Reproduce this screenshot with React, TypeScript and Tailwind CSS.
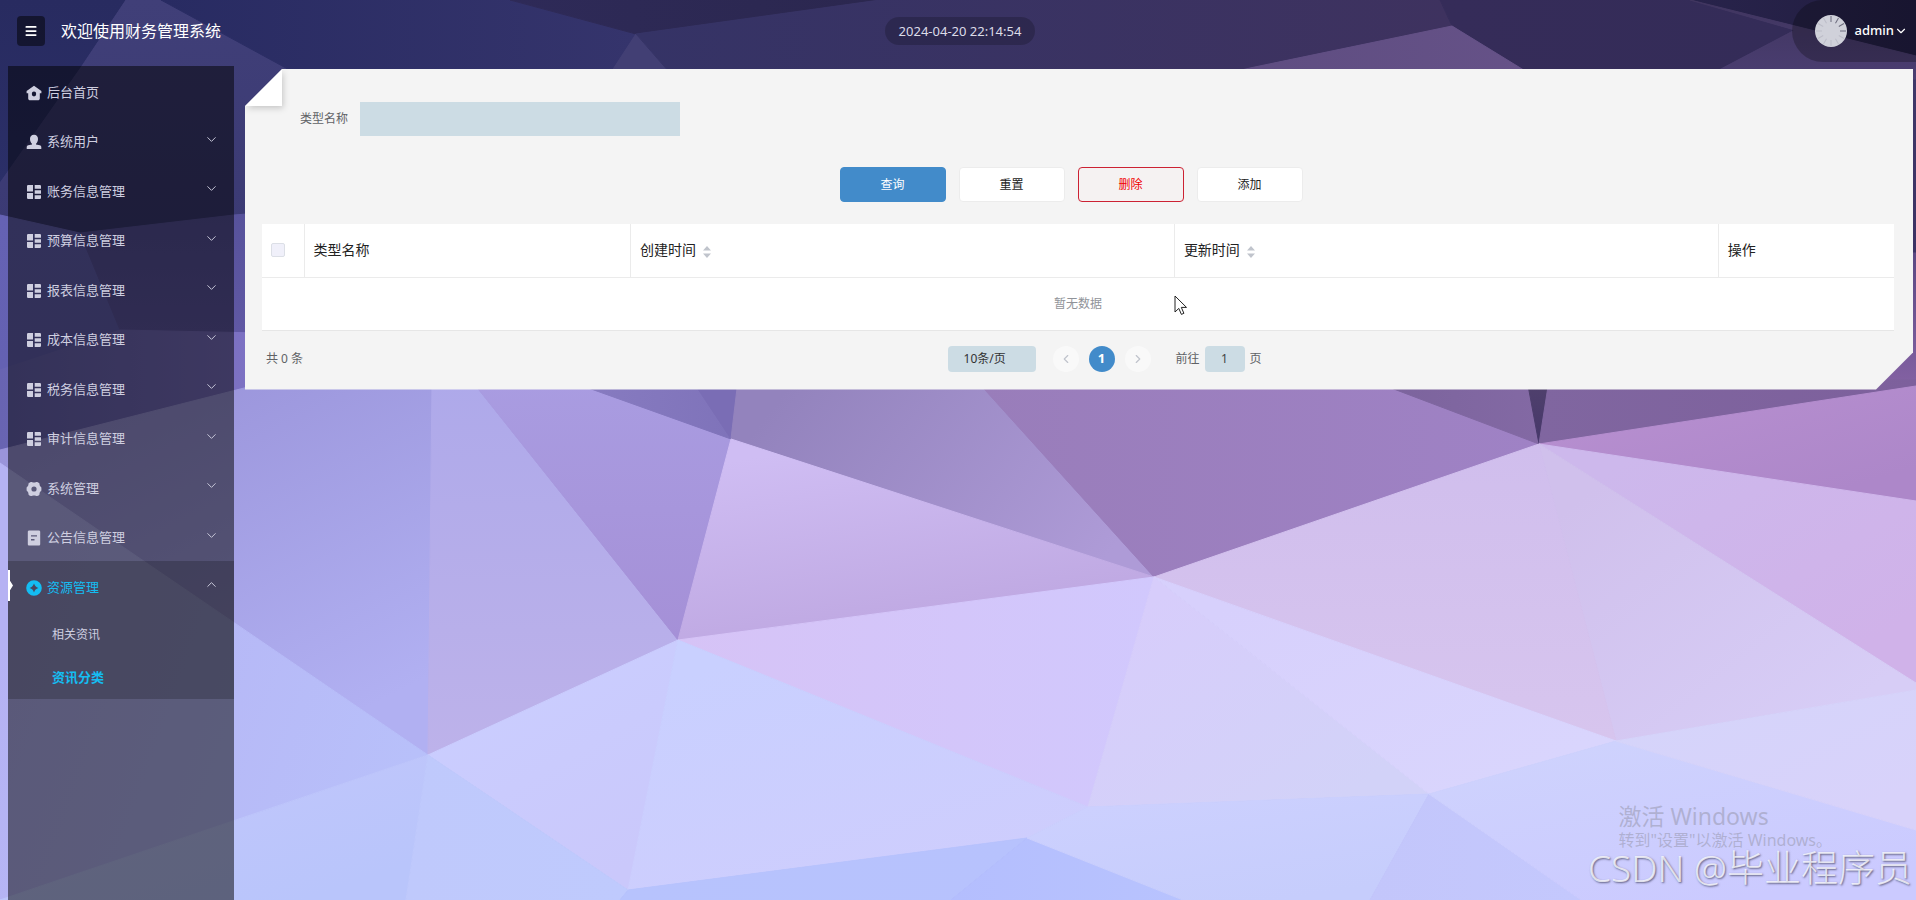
import { ChevronDown, ChevronLeft, ChevronRight, ChevronUp, Menu } from 'lucide-react'
import { twMerge } from 'tailwind-merge'

type IconName = 'home' | 'user' | 'grid' | 'setting' | 'doc' | 'compass'

interface MenuItem {
  label: string
  icon: IconName
  children?: string[]
}

const menu: MenuItem[] = [
  { label: '后台首页', icon: 'home' },
  { label: '系统用户', icon: 'user', children: [] },
  { label: '账务信息管理', icon: 'grid', children: [] },
  { label: '预算信息管理', icon: 'grid', children: [] },
  { label: '报表信息管理', icon: 'grid', children: [] },
  { label: '成本信息管理', icon: 'grid', children: [] },
  { label: '税务信息管理', icon: 'grid', children: [] },
  { label: '审计信息管理', icon: 'grid', children: [] },
  { label: '系统管理', icon: 'setting', children: [] },
  { label: '公告信息管理', icon: 'doc', children: [] },
  { label: '资源管理', icon: 'compass', children: ['相关资讯', '资讯分类'] },
]

// points, start color, end color, gradient direction (deg)
const facets: [string, string, string, number][] = [
  // top strip and left edge
  ['0,0 126,0 82,66 0,183', '#282b60', '#2b2f68', 90],
  ['126,0 161,0 330,92 330,210 234,215 80,233 0,215 0,183 82,66', '#403f78', '#3b3a74', 90],
  ['161,0 510,0 636,34 616,69 600,110 330,92', '#282b62', '#35346c', 0],
  ['510,0 880,0 636,34', '#2e2a58', '#2b274f', 0],
  ['636,34 676,80 606,80', '#423f74', '#423f74', 0],
  ['880,0 1440,0 1452,26 1250,68 1200,90 676,80 636,34', '#353366', '#3e325f', 0],
  ['1440,0 1690,0 1795,30 1700,80 1540,80 1452,26', '#352c59', '#342c58', 0],
  ['1452,26 1540,80 1200,80 1250,68', '#5d4c80', '#665288', 0],
  ['1690,0 1916,0 1916,56', '#28234b', '#211d40', 0],
  ['1690,0 1916,56 1916,90 1700,80 1795,30', '#40355f', '#4c3f74', 90],
  ['1900,80 1916,80 1916,253 1900,253', '#3f3768', '#3c3264', 90],
  ['1860,253 1916,253 1916,386 1860,398', '#5c4883', '#8764a6', 90],
  ['0,215 80,233 120,330 0,370', '#6562b4', '#6461b2', 90],
  ['80,233 234,215 260,213 260,333 120,330', '#57529b', '#6058a4', 90],
  ['0,370 120,330 260,333 260,384 0,450', '#6864b2', '#7e72c4', 0],
  // below the panel
  ['0,450 260,384 432,380 428,755 0,463', '#9a94da', '#b1b0f2', 60],
  ['432,380 471,380 678,640 428,755', '#aea9ea', '#bdb2ea', 90],
  ['471,380 566,380 731,439 678,640', '#a99ce1', '#a590d7', 90],
  ['566,380 692,380 731,439', '#887cc1', '#7f73ba', 0],
  ['692,380 738,380 731,439', '#7a6db5', '#7a6db5', 0],
  ['738,380 976,380 1154,577 731,439', '#9383bd', '#ae9bd7', 20],
  ['976,380 1370,380 1539,444 1154,577', '#997dba', '#9f82c5', 0],
  ['1370,380 1527,380 1539,444', '#7b639c', '#8369a4', 0],
  ['1527,380 1549,380 1539,444', '#50416d', '#46376a', 90],
  ['1549,380 1916,380 1916,386 1539,444', '#8066a0', '#7d609c', 0],
  ['1539,444 1916,386 1916,501', '#b78fd0', '#ad87c9', 45],
  ['1539,444 1916,501 1916,683', '#cdb8ec', '#d0b2e9', 45],
  ['1539,444 1916,683 1916,690 1616,741', '#d0c0ec', '#d7cdf6', 45],
  ['1539,444 1616,741 1154,577', '#d0beed', '#d7c5ee', 90],
  ['731,439 1154,577 678,640', '#cfbdf3', '#bda6e0', 70],
  ['678,640 1154,577 1088,807', '#d6c3f6', '#d1c8fd', 0],
  ['1154,577 1429,794 1088,807', '#d7cdfb', '#d2d2f8', 45],
  ['1154,577 1616,741 1429,794', '#d7d0fc', '#d9d5fd', 45],
  ['428,755 678,640 628,890', '#caceff', '#cac8fb', 60],
  ['678,640 1088,807 1027,838 628,890', '#c9d0ff', '#cecdfd', 60],
  ['0,463 428,755 35,888 0,900', '#b5b2f3', '#b8c0fa', 20],
  ['0,900 35,888 428,755 406,900', '#c2c6fb', '#b9c5fb', 45],
  ['428,755 628,890 620,900 406,900', '#bfc9fc', '#bfcafd', 0],
  ['628,890 1027,838 951,900 620,900', '#b7c3fd', '#b7c2fd', 0],
  ['1027,838 1183,900 951,900', '#b4befe', '#b8c3fe', 0],
  ['1088,807 1429,794 1370,900 1183,900 1027,838', '#ccd0fe', '#c6cdfc', 60],
  ['1429,794 1581,900 1370,900', '#c3c6fb', '#c4c8fd', 0],
  ['1429,794 1616,741 1916,830 1916,900 1581,900', '#ced2fd', '#cbcaff', 60],
  ['1616,741 1916,690 1916,830', '#d5d4fa', '#d8d2fa', 45],
]

function Backdrop() {
  return (
    <svg
      className="absolute inset-0 -z-10 size-full"
      viewBox="0 0 1916 900"
      preserveAspectRatio="xMidYMid slice"
      aria-hidden="true"
    >
      <defs>
        {facets.map(([, from, to, angle], i) => (
          <linearGradient key={i} id={`facet-${i}`} gradientTransform={`rotate(${angle} 0.5 0.5)`}>
            <stop offset="0" stopColor={from} />
            <stop offset="1" stopColor={to} />
          </linearGradient>
        ))}
      </defs>
      <rect width="1916" height="900" fill="#6562b0" />
      {facets.map(([points], i) => (
        <polygon key={i} points={points} fill={`url(#facet-${i})`} stroke={`url(#facet-${i})`} strokeWidth="1" />
      ))}
    </svg>
  )
}

function MenuIcon({ name }: { name: IconName }) {
  return (
    <svg className="size-4 shrink-0" viewBox="0 0 16 16" fill="currentColor" fillRule="evenodd" aria-hidden="true">
      {name === 'home' && (
        <path d="M8 .8 15.400 6v2.200h-1.600v5.400c0 .8-.5 1.600-1.300 1.600h-9c-.8 0-1.300-.8-1.300-1.600V8.200H.6V6ZM8 6.600a2.200 2.400 0 1 0 0 4.800 2.200 2.400 0 0 0 0-4.800Z" />
      )}
      {name === 'user' && (
        <path d="M8 .8c2.600 0 4 1.700 4 4.300 0 2.200-.9 3.900-2 4.600v.7l3.800.8c1 .2 1.500 1 1.500 2V15H.7v-1.800c0-1 .5-1.800 1.500-2l3.800-.8v-.7c-1.100-.7-2-2.400-2-4.600C4 2.500 5.400.8 8 .8Z" />
      )}
      {name === 'grid' && (
        <path d="M1.800 1H7v6.500H1V1.800ZM1 9h6v6H1.800L1 14.200ZM8.700 1h5.500l.8.8v3H8.700ZM8.700 6.200H15v3.500H8.700ZM8.700 11.200H15v3l-.8.8H8.700Z" />
      )}
      {name === 'setting' && (
        <path d="M4.800.9c1.300 0 1.700.6 3.200.6s1.900-.6 3.200-.6c1.100.4 1.900 1 2.300 1.700 0 1.900.4 2.600 1.900 4v2.800c-1.500 1.400-1.900 2.100-1.900 4-.4.700-1.200 1.300-2.300 1.700-1.300 0-1.700-.6-3.200-.6s-1.900.6-3.200.6c-1.100-.4-1.900-1-2.300-1.700 0-1.900-.4-2.600-1.900-4V6.600c1.500-1.400 1.900-2.100 1.900-4C2.900 1.900 3.700 1.300 4.800.9ZM8 5.400a2.600 2.600 0 1 0 0 5.200 2.600 2.600 0 0 0 0-5.200Z" />
      )}
      {name === 'doc' && (
        <path d="M3.200.4h9.600c.8 0 1.400.6 1.400 1.400v12.400c0 .8-.6 1.400-1.400 1.400H3.200c-.8 0-1.400-.6-1.400-1.400V1.800C1.800 1 2.400.4 3.200.4ZM5 5.200v1.400h6V5.200Zm0 3.900v1.400h3.500V9.100Z" />
      )}
      {name === 'compass' && (
        <path d="M8 .2a7.800 7.800 0 1 0 0 15.600A7.800 7.800 0 0 0 8 .2Zm0 3.400c.9 2.500 1.900 3.500 4.400 4.400C9.900 8.900 8.900 9.900 8 12.400 7.100 9.900 6.100 8.900 3.600 8 6.100 7.100 7.100 6.100 8 3.600Z" />
      )}
    </svg>
  )
}

function Header() {
  return (
    <header className="mb-1 grid h-[62px] grid-cols-[1fr_auto_1fr] items-center pl-1 text-white">
      <div className="flex items-center gap-4 pl-[13px]">
        <button
          type="button"
          aria-label="折叠菜单"
          className="flex h-[30px] w-7 items-center justify-center rounded-sm bg-black/50"
        >
          <Menu size={14} strokeWidth={3} />
        </button>
        <h1 className="text-base">欢迎使用财务管理系统</h1>
      </div>
      <time className="rounded-full bg-black/20 px-3.5 text-[13px] leading-7 text-[#dcdce8]">2024-04-20 22:14:54</time>
      <button
        type="button"
        className="flex h-full items-center justify-self-end rounded-l-full bg-black/25 pr-2 pl-[23px] text-[13px] font-medium"
      >
        <svg className="mr-2 size-8" viewBox="0 0 32 32" aria-hidden="true">
          <circle cx="16" cy="16" r="16" fill="#d0d1da" />
          {[0, 30, 60, 90, 120, 150, 180, 210, 240, 270, 300, 330].map((deg, i) => (
            <path
              key={deg}
              d="M16 1v6"
              stroke={i < 4 ? '#6d6d7e' : '#bcbdc8'}
              strokeWidth="1"
              transform={`rotate(${deg} 16 16)`}
            />
          ))}
        </svg>
        admin
        <ChevronDown size={14} />
      </button>
    </header>
  )
}

function Sidebar() {
  return (
    <nav className="ml-2 w-[226px] shrink-0 bg-black/50 text-[13px] text-[#cfcfe0]">
      <ul>
        {menu.map((item) => {
          const open = !!item.children?.length
          const Chevron = open ? ChevronUp : ChevronDown
          return (
            <li key={item.label} className={twMerge('group', open && 'relative bg-black/20')}>
              {open && (
                <span className="absolute top-[9px] left-0 h-[31px] w-[5px] bg-white [clip-path:polygon(0_0,2px_0,2px_35%,100%_50%,2px_65%,2px_100%,0_100%)]" />
              )}
              <button
                type="button"
                className="flex w-full items-center pr-[15px] pl-[18px] group-odd:h-[49px] group-even:h-[50px]"
              >
                <span className={twMerge('flex items-center gap-[5px] pt-1', open && 'text-[#14bdf2]')}>
                  <MenuIcon name={item.icon} />
                  {item.label}
                </span>
                {item.children && <Chevron size={15} strokeWidth={1.5} className="mb-0.5 ml-auto" />}
              </button>
              {open && (
                <ul className="pt-1 pb-px pl-11 leading-[42px]">
                  {item.children?.map((child, i) => (
                    <li key={child}>
                      <a
                        href="#"
                        className={i === 1 ? 'block font-bold text-[#14bdf2]' : 'block text-xs leading-[42px]'}
                      >
                        {child}
                      </a>
                    </li>
                  ))}
                </ul>
              )}
            </li>
          )
        })}
      </ul>
    </nav>
  )
}

function SortIcon() {
  return (
    <svg className="ml-[7px] inline-block h-3.5 w-2" viewBox="0 0 8 14" fill="#c0c4cc" aria-hidden="true">
      <path d="M4 1 8 5.500H0ZM4 13 0 8.500h8Z" />
    </svg>
  )
}

function DataTable() {
  const th = 'border-r border-b border-[#ebebeb] px-[9px] text-left font-normal last:border-r-0'
  return (
    <table className="w-full table-fixed bg-white text-sm text-[#222]">
      <thead>
        <tr className="h-[53px]">
          <th className={twMerge(th, 'w-[42px]')}>
            <input
              type="checkbox"
              aria-label="全选"
              className="block size-3.5 appearance-none rounded-xs border border-[#dcdfe6] bg-[#f0f0fa]"
            />
          </th>
          <th className={twMerge(th, 'w-1/5')}>类型名称</th>
          <th className={twMerge(th, 'w-1/3')}>
            创建时间
            <SortIcon />
          </th>
          <th className={twMerge(th, 'w-1/3')}>
            更新时间
            <SortIcon />
          </th>
          <th className={th}>操作</th>
        </tr>
      </thead>
      <tbody>
        <tr className="h-[53px]">
          <td colSpan={5} className="border-b border-[#e6e6e6] text-center text-xs text-[#909399]">
            暂无数据
          </td>
        </tr>
      </tbody>
    </table>
  )
}

function Pagination() {
  const round = 'flex size-[26px] items-center justify-center rounded-full'
  return (
    <div className="mt-[15px] flex items-center pl-1 text-xs text-[#606266]">
      <span>共 0 条</span>
      <div className="ml-3 flex flex-1 items-center justify-center">
        <select
          aria-label="每页条数"
          className="mr-[17px] h-[26px] w-[88px] appearance-none rounded-sm bg-[#ccdce4] pl-4 text-[#333]"
        >
          <option>10条/页</option>
        </select>
        <div className="flex gap-2.5">
          <button type="button" aria-label="上一页" className={twMerge(round, 'bg-[#f9f9f9] text-[#c0c4cc]')}>
            <ChevronLeft size={14} />
          </button>
          <button type="button" className={twMerge(round, 'bg-[#428bca] text-[13px] font-bold text-white')}>
            1
          </button>
          <button type="button" aria-label="下一页" className={twMerge(round, 'bg-[#f9f9f9] text-[#c0c4cc]')}>
            <ChevronRight size={14} />
          </button>
        </div>
        <label className="ml-[25px] flex items-center gap-[5px]">
          前往
          <input defaultValue="1" className="h-[26px] w-10 rounded-sm bg-[#ccdce4] text-center text-[#444]" />
          页
        </label>
      </div>
    </div>
  )
}

function Panel() {
  const btn = 'h-[35px] w-[106px] rounded-sm border border-[#ececec] bg-white text-[#222]'
  return (
    <main className="relative mt-[3px] mr-[3px] ml-[11px] min-w-0 flex-1 self-start bg-[#f4f4f4] pt-[33px] pr-[19px] pb-[18px] pl-[17px] [clip-path:polygon(37px_0,100%_0,100%_calc(100%-37px),calc(100%-37px)_100%,0_100%,0_37px)]">
      {/* folded corner */}
      <div className="absolute top-0 left-0 drop-shadow-[1px_2px_3px_rgba(0,0,0,0.2)]">
        <div className="size-[37px] bg-white [clip-path:polygon(100%_0,100%_100%,0_100%)]" />
      </div>
      <form className="text-xs" onSubmit={(e) => e.preventDefault()}>
        <label className="flex items-center gap-3 pl-[38px] text-[#606266]">
          类型名称
          <input type="text" className="h-[34px] w-80 bg-[#ccdce4] px-3" />
        </label>
        <div className="mt-[31px] mb-[22px] flex justify-center gap-[13px] pr-[14px]">
          <button type="submit" className={twMerge(btn, 'border-[#428bca] bg-[#428bca] text-white')}>
            查询
          </button>
          <button type="reset" className={btn}>
            重置
          </button>
          <button type="button" className={twMerge(btn, 'border-[#cc2233] bg-[#f5f2f2] text-[#f00000]')}>
            删除
          </button>
          <button type="button" className={btn}>
            添加
          </button>
        </div>
      </form>
      <DataTable />
      <Pagination />
    </main>
  )
}

export default function App() {
  return (
    <div className="relative isolate flex min-h-screen flex-col overflow-hidden font-['Noto_Sans','Noto_Sans_CJK_SC',sans-serif]">
      <Backdrop />
      <Header />
      <div className="flex flex-1">
        <Sidebar />
        <Panel />
      </div>

      {/* activation notice and watermark over the page */}
      <div className="pointer-events-none absolute right-[84px] bottom-[50px] text-[#9c9cb4]/60">
        <p className="text-[23px] leading-7">激活 Windows</p>
        <p className="text-base leading-5">转到"设置"以激活 Windows。</p>
      </div>
      <p className="pointer-events-none absolute right-1 bottom-3 text-[37px] leading-10 font-light text-white/75 [text-shadow:1px_1px_2px_rgba(70,70,100,0.8)]">
        CSDN @毕业程序员
      </p>
      <svg
        className="pointer-events-none absolute top-[295px] left-[1174px] h-[21px] w-[14px]"
        viewBox="0 0 14 21"
        aria-hidden="true"
      >
        <path d="M1 1v16l3.800-3.600 2.600 6 2.500-1.100-2.600-5.900H12.500Z" fill="#fff" stroke="#222" />
      </svg>
    </div>
  )
}
